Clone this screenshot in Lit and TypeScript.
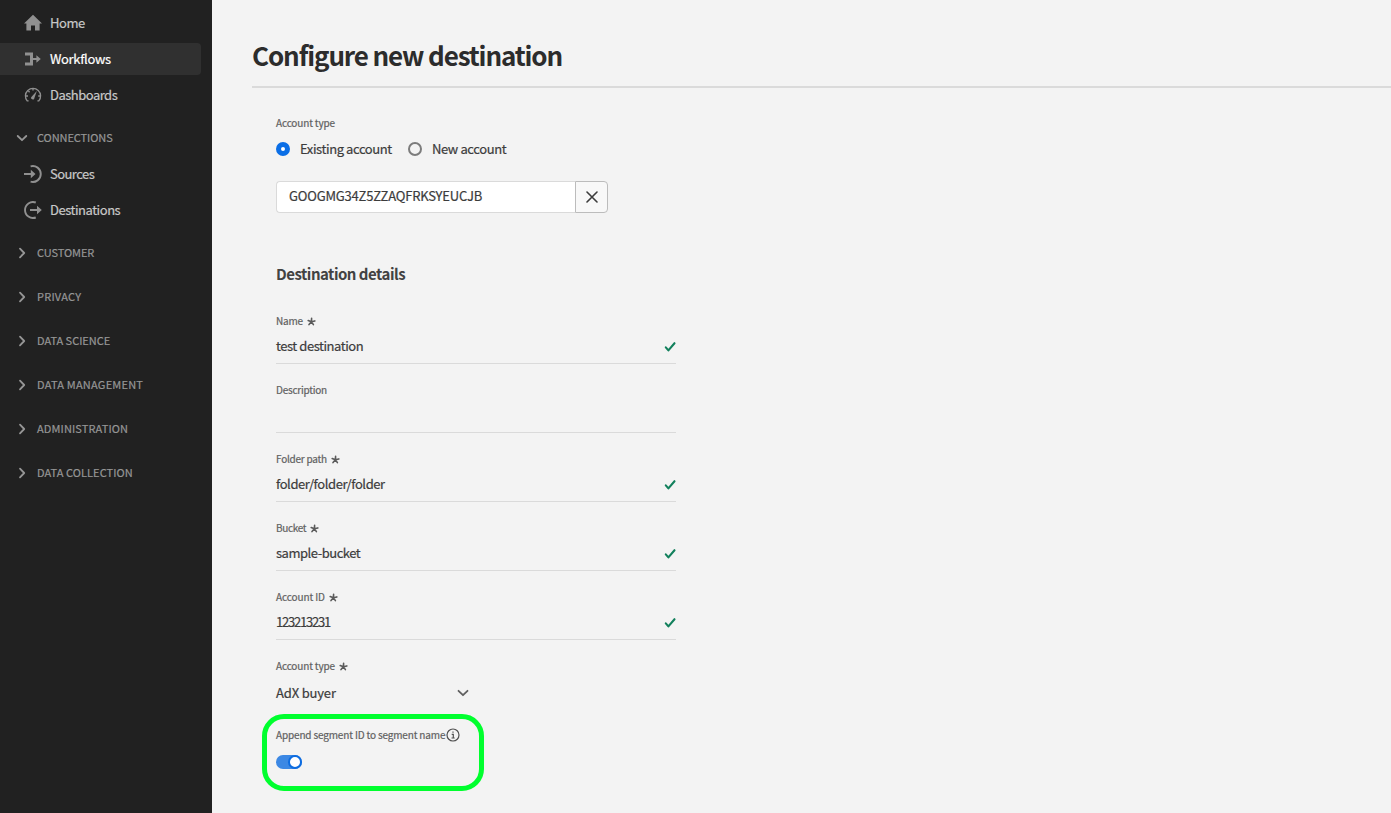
import { LitElement, html, css, svg, nothing } from "lit";
import { customElement } from "lit/decorators.js";

// Letter spacing per string, in px.
const tracking: Record<string, number> = {
  "Home": -0.45, "Workflows": -0.34, "Dashboards": -0.51, "CONNECTIONS": -0.07, "Sources": -0.55,
  "Destinations": -0.47, "CUSTOMER": -0.08, "PRIVACY": 0.22, "DATA SCIENCE": -0.02, "DATA MANAGEMENT": 0.22,
  "ADMINISTRATION": 0.13, "DATA COLLECTION": 0.07, "Configure new destination": -1.12, "Account type": -0.15,
  "Existing account": -0.4, "New account": -0.4, "GOOGMG34Z5ZZAQFRKSYEUCJB": -0.2, "Destination details": -0.5,
  "Name": -0.2, "test destination": -0.45, "Description": -0.24, "Folder path": -0.24, "folder/folder/folder": -0.42,
  "Bucket": -0.33, "sample-bucket": -0.48, "Account ID": -0.1, "123213231": -1.2, "AdX buyer": -0.16,
  "Append segment ID to segment name": -0.155,
};
const t = (s: string) => html`<span class="t" style="letter-spacing:${tracking[s] ?? 0}px">${s}</span>`;

const icons: Record<string, any> = {
  home: svg`<path d="M9 .8 L18 9.6 H15.6 V16.6 H11 V11.5 H7 V16.6 H2.4 V9.6 H0 Z"/>`,
  workflows: svg`<path d="M1 2.6 H9 V8 H12.4 V5.2 L16.8 9 L12.4 12.8 V10 H9 V15.4 H1 V12.4 H6 V5.6 H1 Z"/>`,
  dashboards: svg`<g fill="none" stroke="currentColor"><path stroke-width="1.3" d="M4.6 14.9 H3.2 A7.6 7.6 0 1 1 14.8 14.9 H13.4"/><path stroke-width="1.4" d="M9 2.4 V4.6 M4.4 5 L5.6 6.2 M1.8 10 H4 M16.2 10 H14.2"/></g><path d="M12.8 5 L10.4 12 A1.6 1.6 0 1 1 7.6 10.8 Z"/>`,
  sources: svg`<path d="M6.6 1.3 A8 8 0 1 1 6.6 16.7" fill="none" stroke="currentColor" stroke-width="1.9"/><path d="M0 8 H6.8 V4.8 L11.5 9 L6.8 13.2 V10 H0 Z"/>`,
  destinations: svg`<path d="M11.8 1.5 A8 8 0 1 0 11.8 16.5" fill="none" stroke="currentColor" stroke-width="1.9"/><path d="M6 8 H13 V4.8 L17.8 9 L13 13.2 V10 H6 Z"/>`,
};

@customElement("app-root")
export class AppRoot extends LitElement {
  static styles = css`
    :host { display: flex; width: 1391px; height: 813px; overflow: hidden; position: relative; background: #f3f3f3; color: #3c3c3c; font: 13px/20px "Noto Sans CJK SC", "Noto Sans", sans-serif; }
    * { box-sizing: border-box; }
    .t { white-space: nowrap; -webkit-text-stroke: 0.2px currentColor; }
    svg { display: block; flex: none; }
    nav { width: 212px; background: #212121; padding-top: 7px; display: flex; flex-direction: column; flex: none; }
    .item { height: 32px; width: 201px; margin-bottom: 4px; padding-left: 24px; display: flex; align-items: center; gap: 8px; color: #c8c8c8; border-radius: 0 4px 4px 0; flex: none; }
    .item svg { color: #909090; fill: currentColor; }
    .on { background: #303030; color: #fff; }
    .group { height: 32px; margin-bottom: 12px; padding-left: 16px; display: flex; align-items: center; gap: 9px; font-size: 11px; color: #969696; flex: none; }
    .group .t { padding-bottom: 2px; }
    .group.first { margin: 7px 0 4px; }
    .group.second { margin-top: 7px; }
    main { flex: 1; padding-left: 40px; }
    h1 { margin: 0; height: 88px; padding-top: 36px; border-bottom: 2px solid #dadada; font-size: 26px; line-height: 38px; font-weight: 700; color: #2c2c2c; }
    h1 .t, h2 .t { -webkit-text-stroke: 0; }
    .body { padding: 25px 0 0 24px; }
    .label { font-size: 10px; line-height: 20px; height: 20px; display: flex; align-items: center; color: #606060; }
    .label .star { margin-left: 4px; }
    .radios { display: flex; height: 32px; align-items: center; }
    .radio { width: 14px; height: 14px; border: 2px solid #7c7c7c; border-radius: 50%; margin-right: 10px; }
    .radio.sel { border: 5px solid #0a6ee6; background: #fff; }
    .opt { width: 92px; margin-right: 16px; display: flex; }
    .picker { display: flex; height: 32px; width: 332px; margin-top: 16px; }
    .input { width: 299px; background: #fff; border: 1px solid #dadada; border-right: 0; border-radius: 4px 0 0 4px; padding: 4px 12px; }
    .close { width: 33px; border: 1px solid #bcbcbc; border-radius: 0 4px 4px 0; background: #f8f8f8; display: grid; place-items: center; }
    h2 { margin: 50px 0 27px; font-size: 15px; line-height: 21px; font-weight: 700; color: #424242; }
    .field { width: 400px; height: 53px; margin-bottom: 16px; border-bottom: 1px solid #dadada; }
    .value { display: flex; align-items: center; justify-content: space-between; height: 31px; }
    .value .t { padding-bottom: 2px; }
    .select { width: 193px; height: 34px; display: flex; align-items: center; justify-content: space-between; }
    .append { margin-top: 15px; gap: 1px; }
    .toggle { width: 26px; height: 14px; border-radius: 7px; background: #3c88e4; margin-top: 10px; display: flex; justify-content: flex-end; }
    .knob { width: 14px; height: 14px; border: 2px solid #0d6ce0; border-radius: 50%; background: #fff; }
    .mark { position: absolute; left: 262px; top: 714px; width: 222px; height: 77px; border: 5px solid #00ff2e; border-radius: 22px; }
  `;
  item(i: string, s: string, on = false) {
    return html`<div class="item ${on ? "on" : ""}"><svg width="18" height="18" viewBox="0 0 18 18">${icons[i]}</svg>${t(s)}</div>`;
  }
  group(s: string, c = "") {
    return html`<div class="group ${c}"><svg width="12" height="12" viewBox="0 0 12 12" fill="none" stroke="currentColor" stroke-width="1.8" stroke-linecap="round" stroke-linejoin="round"><path d=${c === "first" ? "M1.7 4 L6 8.2 L10.3 4" : "M4 1.7 L8.2 6 L4 10.3"}/></svg>${t(s)}</div>`;
  }
  label(s: string, req = true) {
    return html`<div class="label">${t(s)}${req ? html`<svg class="star" width="9" height="9" viewBox="0 0 9 9" stroke="#5a5a5a" stroke-width="1.6" stroke-linecap="round"><path d="M4.4 4.8 L4.6 1.4 M4.4 4.8 L7.8 3.9 M4.4 4.8 L6.4 7.6 M4.4 4.8 L2 7.6 M4.4 4.8 L1.2 3.5"/></svg>` : nothing}</div>`;
  }
  field(l: string, v: string) {
    return html`<div class="field">${this.label(l, !!v)}${v ? html`<div class="value">${t(v)}<svg width="12" height="12" viewBox="0 0 12 12" fill="none" stroke="#12805c" stroke-width="2.1" stroke-linecap="round" stroke-linejoin="round"><path d="M1.8 6.4 L4.4 9.4 L10.5 2.2"/></svg></div>` : nothing}</div>`;
  }
  render() {
    return html`<nav>
      ${this.item("home", "Home")}${this.item("workflows", "Workflows", true)}${this.item("dashboards", "Dashboards")}
      ${this.group("CONNECTIONS", "first")}${this.item("sources", "Sources")}${this.item("destinations", "Destinations")}
      ${this.group("CUSTOMER", "second")}${["PRIVACY", "DATA SCIENCE", "DATA MANAGEMENT", "ADMINISTRATION", "DATA COLLECTION"].map((s) => this.group(s))}
    </nav>
    <main><h1>${t("Configure new destination")}</h1>
      <div class="body">
        ${this.label("Account type", false)}
        <div class="radios"><i class="radio sel"></i><span class="opt">${t("Existing account")}</span><i class="radio"></i>${t("New account")}</div>
        <div class="picker"><div class="input">${t("GOOGMG34Z5ZZAQFRKSYEUCJB")}</div><div class="close"><svg width="12" height="12" viewBox="0 0 12 12" stroke="#3c3c3c" stroke-width="1.6" stroke-linecap="round"><path d="M1 1 L11 11 M11 1 L1 11"/></svg></div></div>
        <h2>${t("Destination details")}</h2>
        ${this.field("Name", "test destination")}${this.field("Description", "")}${this.field("Folder path", "folder/folder/folder")}${this.field("Bucket", "sample-bucket")}${this.field("Account ID", "123213231")}
        ${this.label("Account type")}
        <div class="select">${t("AdX buyer")}<svg width="12" height="12" viewBox="0 0 12 12" fill="none" stroke="#606060" stroke-width="1.8" stroke-linecap="round" stroke-linejoin="round"><path d="M1.5 3.8 L6 8.2 L10.5 3.8"/></svg></div>
        <div class="label append">${t("Append segment ID to segment name")}<svg width="14" height="14" viewBox="0 0 14 14" fill="none" stroke="#505050" stroke-width="1.2"><circle cx="7" cy="7" r="6"/><path d="M5.7 6.4 H7.3 V10 M5.5 10 H8.7 M7 3.4 V4.8"/></svg></div>
        <div class="toggle"><i class="knob"></i></div>
      </div>
    </main><div class="mark"></div>`;
  }
}
